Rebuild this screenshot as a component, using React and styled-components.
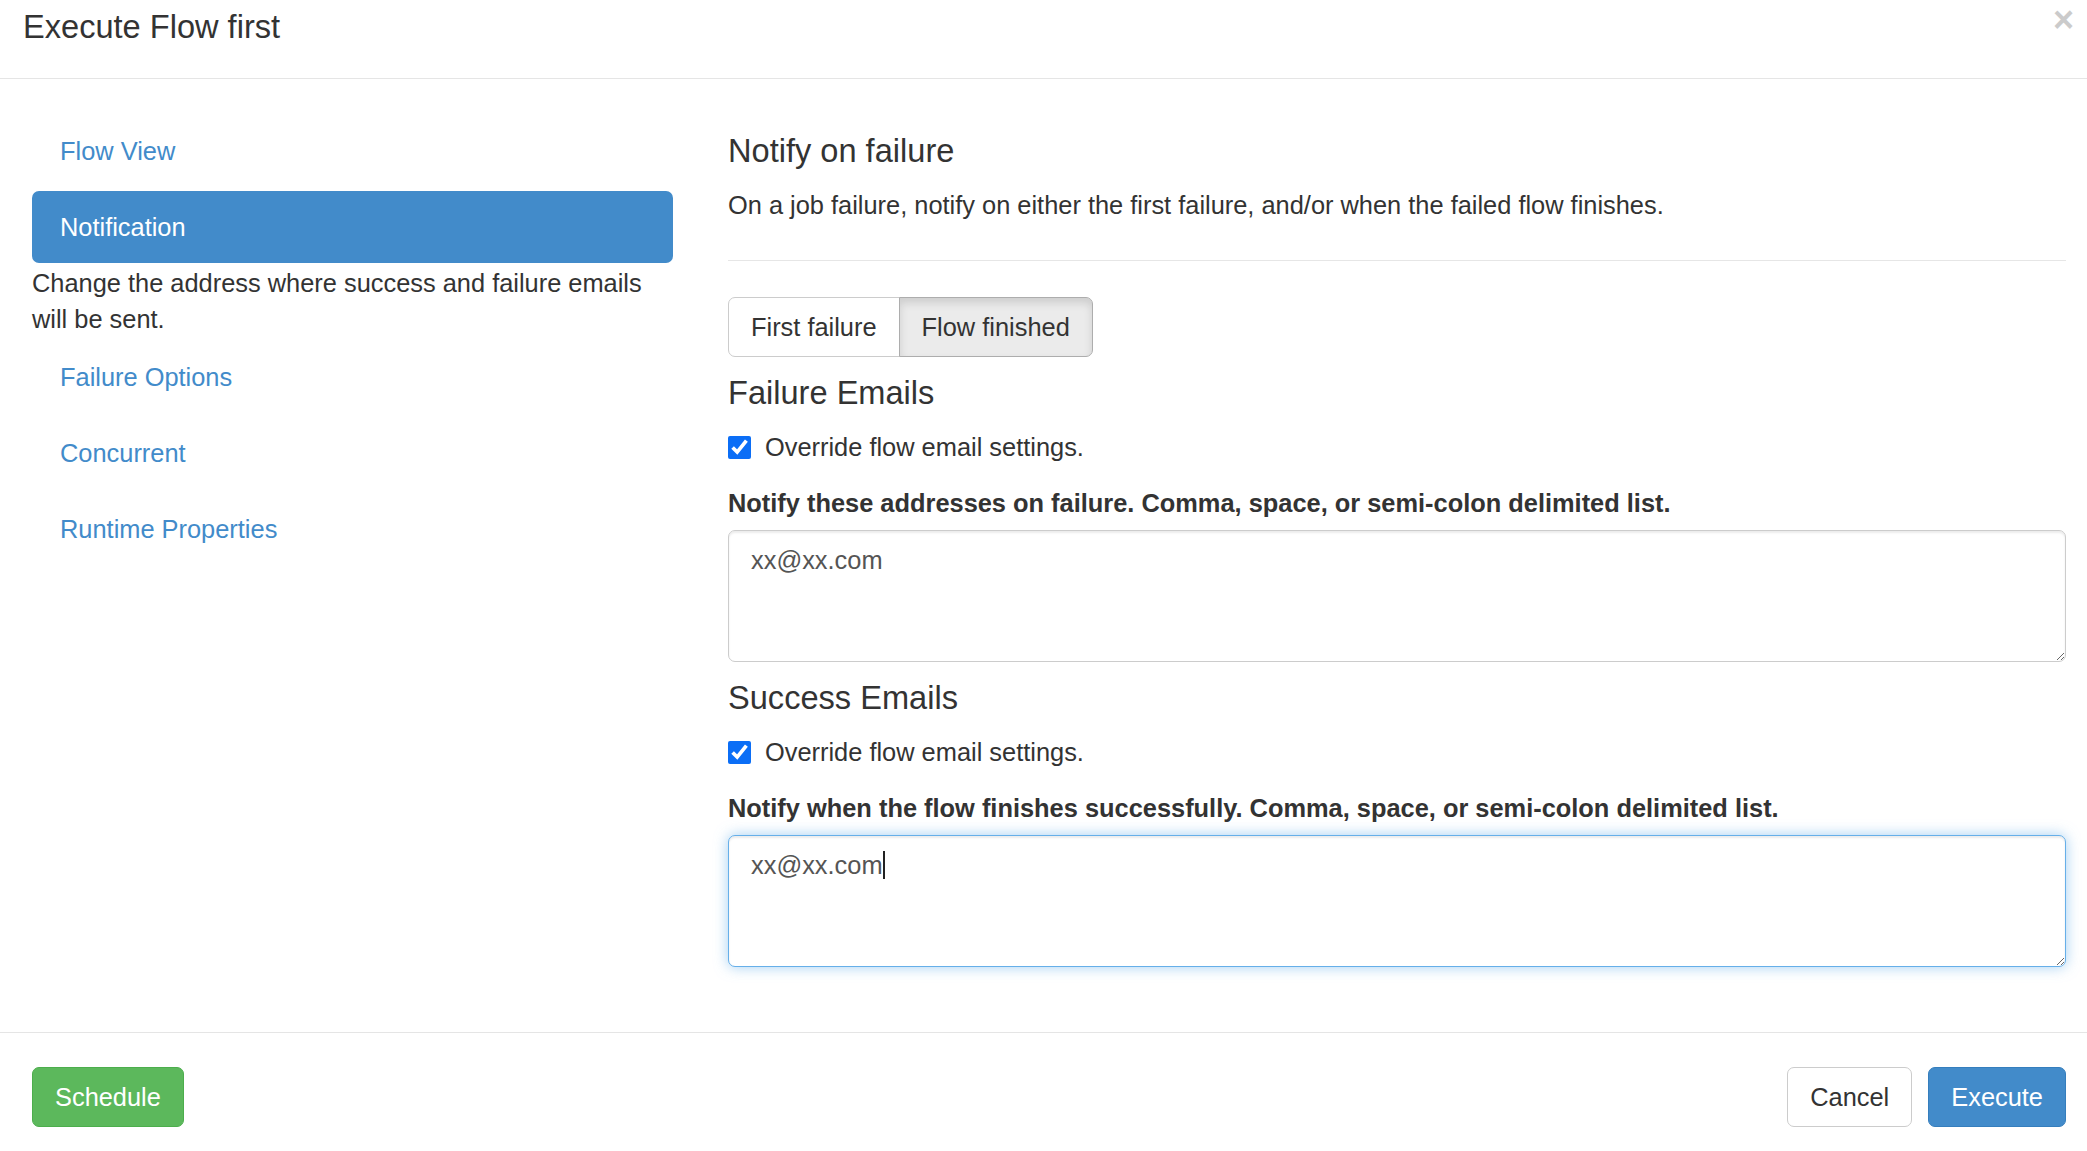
import React from "react";
import styled, { createGlobalStyle } from "styled-components";

const GlobalStyle = createGlobalStyle`
  html, body {
    margin: 0;
    padding: 0;
    background: #fff;
  }
  body {
    font-family: "Liberation Sans", Arial, sans-serif;
    font-size: 25.4px;
    line-height: 36px;
    color: #333;
  }
  * {
    box-sizing: border-box;
  }
`;

const navItems = [
  { label: "Flow View" },
  {
    label: "Notification",
    active: true,
    help: "Change the address where success and failure emails will be sent.",
  },
  { label: "Failure Options" },
  { label: "Concurrent" },
  { label: "Runtime Properties" },
];

export default function App() {
  return (
    <>
      <GlobalStyle />
      <Modal>
        <Header>
          <Title>Execute Flow first</Title>
          <Close type="button" aria-label="Close">×</Close>
        </Header>

        <Body>
          <Side>
            <NavList>
              {navItems.map((item, i) => (
                <li key={item.label}>
                  <NavLink href="#" $active={item.active} $first={i === 0}>
                    {item.label}
                  </NavLink>
                  {item.help && <NavHelp>{item.help}</NavHelp>}
                </li>
              ))}
            </NavList>
          </Side>

          <Content>
            <SectionTitle>Notify on failure</SectionTitle>
            <Lead>
              On a job failure, notify on either the first failure, and/or when
              the failed flow finishes.
            </Lead>
            <Rule />
            <BtnGroup>
              <ToggleBtn type="button">First failure</ToggleBtn>
              <ToggleBtn type="button" $active>
                Flow finished
              </ToggleBtn>
            </BtnGroup>

            <SectionTitle>Failure Emails</SectionTitle>
            <CheckRow>
              <Check type="checkbox" defaultChecked />
              Override flow email settings.
            </CheckRow>
            <FieldLabel>
              Notify these addresses on failure. Comma, space, or semi-colon
              delimited list.
            </FieldLabel>
            <Area rows={3} defaultValue="xx@xx.com" />

            <SectionTitle>Success Emails</SectionTitle>
            <CheckRow>
              <Check type="checkbox" defaultChecked />
              Override flow email settings.
            </CheckRow>
            <FieldLabel>
              Notify when the flow finishes successfully. Comma, space, or
              semi-colon delimited list.
            </FieldLabel>
            <AreaWrap>
              <Area rows={3} defaultValue="xx@xx.com" $focused />
              <Caret />
            </AreaWrap>
          </Content>
        </Body>

        <Footer>
          <Btn type="button" $variant="success">
            Schedule
          </Btn>
          <FooterRight>
            <Btn type="button">Cancel</Btn>
            <Btn type="button" $variant="primary">
              Execute
            </Btn>
          </FooterRight>
        </Footer>
      </Modal>
    </>
  );
}

const Modal = styled.div`
  width: 2087px;
  height: 1151px;
  overflow: hidden;
  background: #fff;
  display: flex;
  flex-direction: column;
`;

const Header = styled.div`
  display: flex;
  justify-content: space-between;
  align-items: flex-start;
  padding: 4px 13px 28px 23px;
  border-bottom: 1px solid #e5e5e5;
`;

const Title = styled.h4`
  margin: 0;
  font-size: 32.6px;
  line-height: 46px;
  font-weight: 400;
  color: #333;
`;

const Close = styled.button`
  margin-top: 1px;
  padding: 0;
  border: 0;
  background: none;
  font-family: "Liberation Sans", Arial, sans-serif;
  font-size: 36px;
  line-height: 30px;
  font-weight: 700;
  color: #000;
  opacity: 0.2;
  cursor: pointer;
`;

const Body = styled.div`
  display: flex;
  gap: 55px;
  padding: 36px 21px 65px 32px;
`;

const Side = styled.div`
  width: 641px;
  flex-shrink: 0;
`;

const NavList = styled.ul`
  list-style: none;
  margin: 0;
  padding: 0;
`;

const NavLink = styled.a`
  display: block;
  margin-top: ${(p) => (p.$first ? "0" : "4px")};
  padding: 18px 28px;
  line-height: 36px;
  border-radius: 7px;
  text-decoration: none;
  color: ${(p) => (p.$active ? "#fff" : "#428bca")};
  background: ${(p) => (p.$active ? "#428bca" : "transparent")};
`;

const NavHelp = styled.p`
  margin: 0;
  padding-top: 2px;
  color: #333;
`;

const Content = styled.div`
  flex: 1;
  min-width: 0;
`;

const SectionTitle = styled.h4`
  margin: 18px 0;
  font-size: 32.6px;
  line-height: 36px;
  font-weight: 400;
  color: #333;
`;

const Lead = styled.p`
  margin: 0;
`;

const Rule = styled.hr`
  margin: 37px 0 36px;
  border: 0;
  border-top: 1px solid #e6e6e6;
`;

const BtnGroup = styled.div`
  display: flex;
`;

const ToggleBtn = styled.button`
  padding: 11px 22px;
  font-family: "Liberation Sans", Arial, sans-serif;
  font-size: 25.4px;
  line-height: 36px;
  color: #333;
  background: ${(p) => (p.$active ? "#ebebeb" : "#fff")};
  border: 1px solid ${(p) => (p.$active ? "#adadad" : "#ccc")};
  box-shadow: ${(p) =>
    p.$active ? "inset 0 5px 9px rgba(0, 0, 0, 0.125)" : "none"};
  cursor: pointer;

  &:first-child {
    border-radius: 7px 0 0 7px;
  }
  &:last-child {
    border-radius: 0 7px 7px 0;
    margin-left: -1px;
  }
`;

const CheckRow = styled.label`
  display: flex;
  align-items: center;
  gap: 14px;
  margin: 18px 0 20px;
  line-height: 36px;
  cursor: pointer;
`;

const Check = styled.input`
  width: 23px;
  height: 23px;
  margin: 0;
  accent-color: #0b6ef6;
`;

const FieldLabel = styled.label`
  display: block;
  margin-bottom: 9px;
  font-weight: 700;
  line-height: 36px;
`;

const AreaWrap = styled.div`
  position: relative;
`;

const Area = styled.textarea`
  display: block;
  width: 100%;
  height: 132px;
  padding: 11px 22px;
  font-family: "Liberation Sans", Arial, sans-serif;
  font-size: 25.4px;
  line-height: 36px;
  color: #555;
  background: #fff;
  border: 1px solid ${(p) => (p.$focused ? "#66afe9" : "#ccc")};
  border-radius: 7px;
  outline: none;
  box-shadow: ${(p) =>
    p.$focused
      ? "inset 0 2px 2px rgba(0,0,0,.075), 0 0 14px rgba(102,175,233,.6)"
      : "inset 0 2px 2px rgba(0,0,0,.075)"};
`;

const Caret = styled.span`
  position: absolute;
  left: 155px;
  top: 16px;
  width: 2px;
  height: 28px;
  background: #222;
`;

const Footer = styled.div`
  display: flex;
  justify-content: space-between;
  align-items: flex-start;
  padding: 34px 21px 0 32px;
  border-top: 1px solid #e5e5e5;
`;

const FooterRight = styled.div`
  display: flex;
  gap: 16px;
`;

const variants = {
  default: { bg: "#fff", border: "#ccc", color: "#333" },
  success: { bg: "#5cb85c", border: "#4cae4c", color: "#fff" },
  primary: { bg: "#428bca", border: "#357ebd", color: "#fff" },
};

const Btn = styled.button`
  padding: 11px 22px;
  font-family: "Liberation Sans", Arial, sans-serif;
  font-size: 25.4px;
  line-height: 36px;
  border-radius: 7px;
  cursor: pointer;
  color: ${(p) => variants[p.$variant || "default"].color};
  background: ${(p) => variants[p.$variant || "default"].bg};
  border: 1px solid ${(p) => variants[p.$variant || "default"].border};
`;
